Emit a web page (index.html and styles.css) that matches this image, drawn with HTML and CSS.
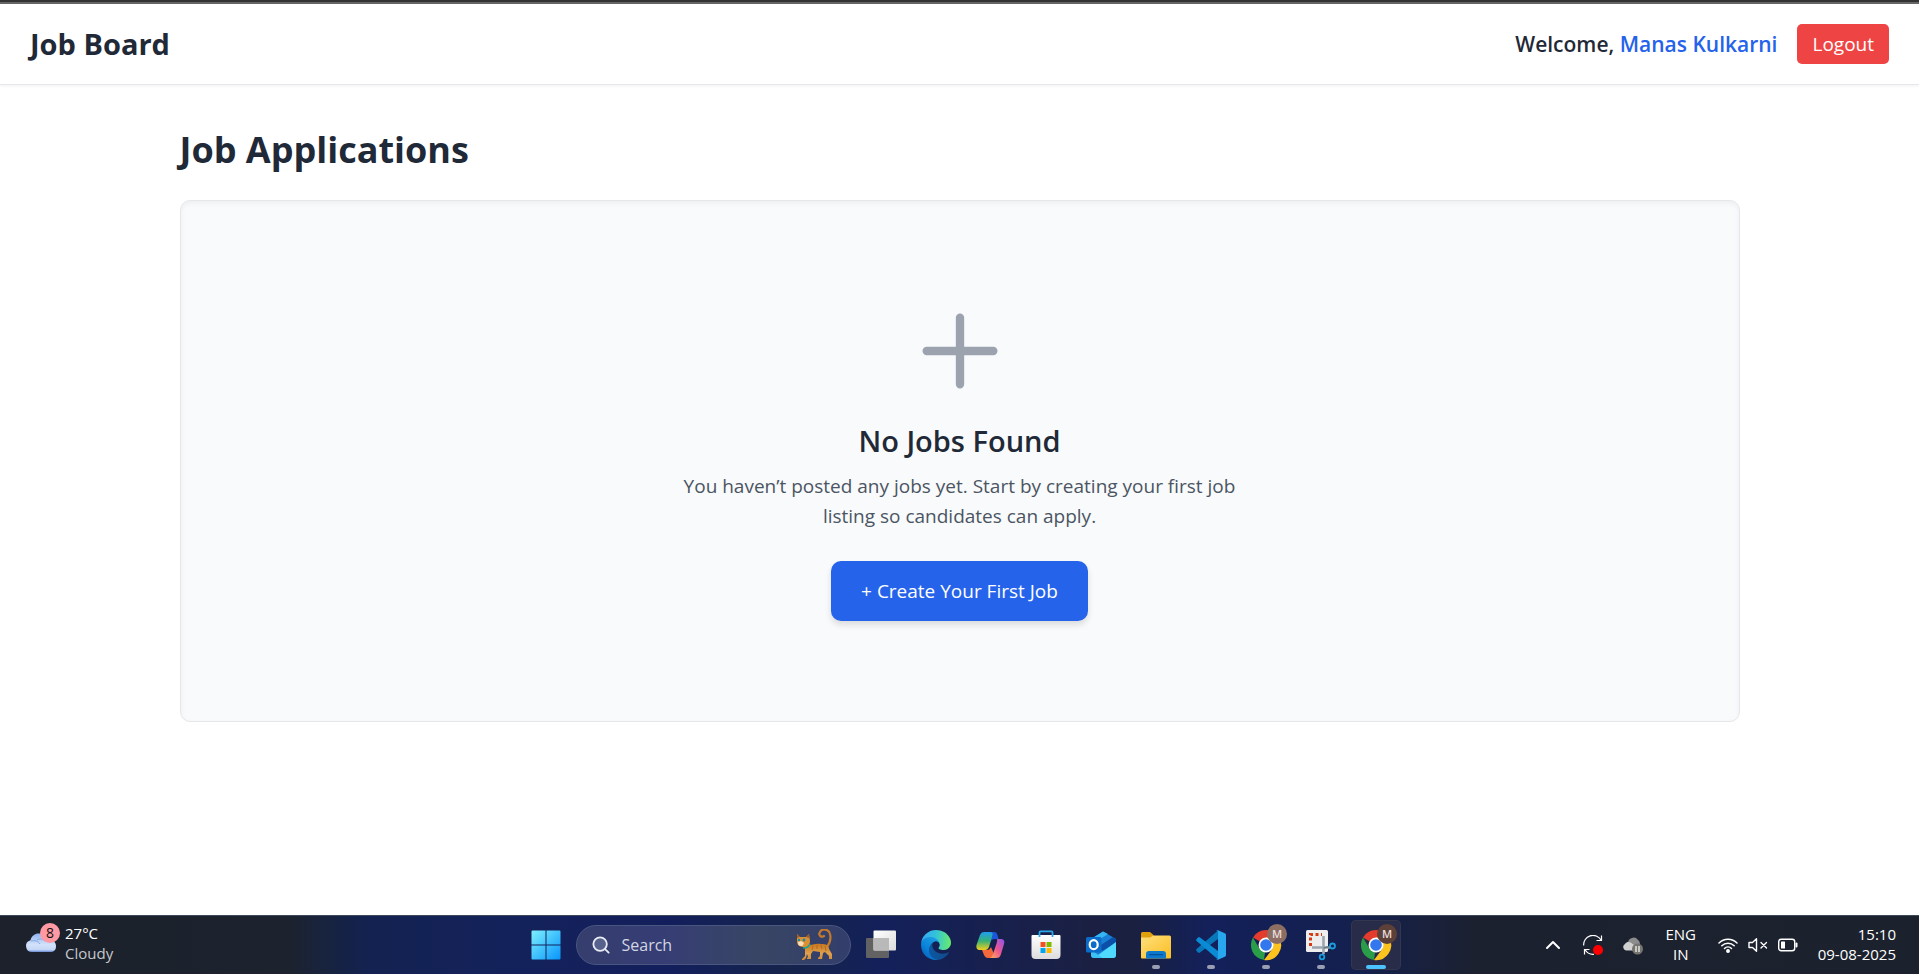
FILE: index.html
```html
<!DOCTYPE html>
<html lang="en">
<head>
<meta charset="utf-8">
<meta name="viewport" content="width=device-width, initial-scale=1">
<title>Job Board</title>
<link rel="stylesheet" href="styles.css">
</head>
<body>
<header class="site-header">
  <div class="brand">Job Board</div>
  <div class="account">
    <p class="welcome">Welcome, <span class="user-name">Manas Kulkarni</span></p>
    <button class="logout" type="button">Logout</button>
  </div>
</header>

<main class="page">
  <h1 class="page-title">Job Applications</h1>
  <section class="empty">
    <svg class="empty-icon" viewBox="0 0 24 24" fill="none" stroke="currentColor" stroke-width="2" stroke-linecap="round" aria-hidden="true"><path d="M12 4v16M4 12h16"/></svg>
    <h2 class="empty-title">No Jobs Found</h2>
    <p class="empty-text">You haven’t posted any jobs yet. Start by creating your first job listing so candidates can apply.</p>
    <button class="create" type="button">+ Create Your First Job</button>
  </section>
</main>

<footer class="taskbar">
  <button class="weather" type="button">
    <svg class="weather-icon" viewBox="0 0 36 32" aria-hidden="true">
      <defs><linearGradient id="cloud" x1="0" y1="0" x2="0" y2="1"><stop offset="0" stop-color="#8fb3ee"/><stop offset=".6" stop-color="#d3e2fa"/><stop offset=".88" stop-color="#c4d6f7"/><stop offset="1" stop-color="#6488d3"/></linearGradient></defs>
      <path fill="url(#cloud)" d="M7 29a6 6 0 0 1-1.500-11.800C7 11.500 12 9.500 16 11c4 1 6 3 7 6 4-1 8 2 8 6 0 4-2 6-6 6z"/>
      <path fill="none" stroke="#84a6e3" stroke-width="1" d="M6 18c4-1 7 0 9 3M12 17c3-2 6-1 8 1"/>
      <circle cx="25" cy="10" r="10" fill="#ff99a4"/>
      <text class="badge-count" x="25" y="15" text-anchor="middle">8</text>
    </svg>
    <span class="weather-text"><span>27°C</span><span class="weather-state">Cloudy</span></span>
  </button>

  <nav class="apps" aria-label="Apps">
    <button class="app" type="button" aria-label="Start">
      <svg class="app-icon" viewBox="0 0 30 30"><defs><linearGradient id="win" x1="0" y1="0" x2="1" y2="1"><stop offset="0" stop-color="#7df0fd"/><stop offset="1" stop-color="#0795fb"/></linearGradient></defs><path fill="url(#win)" d="M1.500.500H14.500V14.500H.500V1.500a1 1 0 0 1 1-1zM15.500.500H28.500a1 1 0 0 1 1 1V14.500h-14zM.500 15.500h14v14H1.500a1 1 0 0 1-1-1zM15.500 15.500h14v13a1 1 0 0 1-1 1h-13z"/></svg>
    </button>
    <label class="search">
      <svg class="search-icon" viewBox="0 0 20 20" fill="none" stroke="#e8ebf4" stroke-width="2" stroke-linecap="round" aria-hidden="true"><circle cx="9" cy="9" r="7.500" fill="#56628b"/><path d="m14.500 14.500 4 4"/></svg>
      <input class="search-input" type="search" placeholder="Search" aria-label="Search">
      <svg class="cat" viewBox="0 0 36 32" aria-hidden="true">
        <defs><linearGradient id="fur" x1="0" y1="0" x2="0" y2="1"><stop offset="0" stop-color="#c9771f"/><stop offset=".6" stop-color="#e0a04c"/><stop offset="1" stop-color="#d08a38"/></linearGradient></defs>
        <path fill="none" stroke="#c47a2c" stroke-width="2.200" stroke-linecap="round" d="M31 18c3-4 4-9 3-13-1-5-8-6-10-2-2 3 1 6 4 4"/>
        <path fill="url(#fur)" d="M9 17c6 0 10-3 16-2 5 0 8 1 8 5l3 5v5h-3v-3l-4-4-2 1-1 6h-4v-1l2-2v-4l-7-1-2 3v5h-4v-1l1-1-1-3-1 4-2 2H6v-1l3-3z"/>
        <path fill="none" stroke="#b5691f" stroke-width="1" d="M17 17l-1 4M21 16v4M25 16l1 4M29 17l1 5"/>
        <path fill="#db9036" d="M1 5l3 3h6l3-3 1 7c0 4-3 6-6 6-4 0-7-2-7-5z"/>
        <path fill="#f6dfba" d="M2 13c2-1 4-1 6 1-1 3-2 3-3 3-2 0-3-1-3-4z"/>
        <path fill="#a65a1c" d="m1 5 3 3-3 1zm12 0v4l-3-1z"/>
        <circle cx="3" cy="11" r="1.200" fill="#168ca0"/><circle cx="8" cy="11" r="1.400" fill="#168ca0"/>
        <path fill="none" stroke="#1fa78b" stroke-width="1.500" d="M7 19c3 0 6-1 7-4"/>
      </svg>
    </label>
    <button class="app" type="button" aria-label="Task view">
      <svg class="app-icon" viewBox="0 0 30 30"><defs><linearGradient id="tv" x1="0" y1="0" x2="1" y2="1"><stop offset="0" stop-color="#fff"/><stop offset="1" stop-color="#dcdcdc"/></linearGradient></defs><rect y="8" width="23" height="20" rx="1" fill="#626262"/><rect x="7.500" y=".500" width="22.500" height="20" rx="1" fill="url(#tv)"/><path fill="#b9b9b9" d="M7.500 8H23v12.500H8.500a1 1 0 0 1-1-1z"/></svg>
    </button>
    <button class="app" type="button" aria-label="Edge">
      <svg class="app-icon" viewBox="0 0 256 256">
        <defs>
          <linearGradient id="e1" x1="60" y1="180" x2="240" y2="180" gradientUnits="userSpaceOnUse"><stop offset="0" stop-color="#0c59a4"/><stop offset="1" stop-color="#114a8b"/></linearGradient>
          <linearGradient id="e2" x1="150" y1="100" x2="45" y2="220" gradientUnits="userSpaceOnUse"><stop offset="0" stop-color="#1b9de2"/><stop offset=".67" stop-color="#0883d9"/><stop offset="1" stop-color="#0a6cc5"/></linearGradient>
          <linearGradient id="e3" x1="10" y1="90" x2="250" y2="110" gradientUnits="userSpaceOnUse"><stop offset="0" stop-color="#35aaf0"/><stop offset=".45" stop-color="#32c2dc"/><stop offset="1" stop-color="#66eb6e"/></linearGradient>
        </defs>
        <path fill="url(#e1)" d="M231 190.500c-3.400 1.800-6.900 3.300-10.500 4.700a101.900 101.900 0 0 1-35.900 6.500c-47.300 0-88.500-32.500-88.500-74.300.1-11.400 6.400-21.800 16.400-27.200-42.800 1.800-53.800 46.400-53.800 72.500 0 73.900 68.100 81.400 82.800 81.400 7.900 0 19.800-2.300 27-4.600l1.300-.4a128.300 128.300 0 0 0 66.600-52.800 4 4 0 0 0-5.400-5.800z"/>
        <path fill="url(#e2)" d="M105.700 241.400a79.200 79.200 0 0 1-22.700-21.300 80.700 80.700 0 0 1 29.500-119.900c3.100-1.500 8.500-4.100 15.600-4a32.400 32.400 0 0 1 25.700 13 31.900 31.900 0 0 1 6.300 18.700c0-.2 24.500-79.600-80-79.600-43.900 0-80 41.700-80 78.200a130.200 130.200 0 0 0 12.100 56 128 128 0 0 0 156.400 67.100 75.500 75.500 0 0 1-62.800-8z"/>
        <path fill="url(#e3)" d="M152.300 148.900c-.9 1-3.400 2.500-3.400 5.600 0 2.600 1.700 5.200 4.800 7.300 14.300 10 41.400 8.600 41.500 8.600a59.600 59.600 0 0 0 30.300-8.300 61.400 61.400 0 0 0 30.400-52.900c.3-22.400-8-37.300-11.300-43.900C223.500 23.900 177.700 0 128 0A128 128 0 0 0 0 126.200c.5-36.500 36.800-66 80-66 3.500 0 23.500.3 42 10.100 16.300 8.500 24.900 18.800 30.800 29.200 6.200 10.700 7.300 24.100 7.300 29.500s-2.700 13.300-7.800 19.900z"/>
      </svg>
    </button>
    <button class="app" type="button" aria-label="Copilot">
      <svg class="app-icon" viewBox="0 0 30 30">
        <defs>
          <linearGradient id="c1" x1="0" y1="0" x2="0" y2="1"><stop offset="0" stop-color="#1e9df0"/><stop offset=".5" stop-color="#38b275"/><stop offset="1" stop-color="#f4cf1b"/></linearGradient>
          <linearGradient id="c2" x1="1" y1="0" x2="0" y2="1"><stop offset="0" stop-color="#8a55f0"/><stop offset=".5" stop-color="#ec558f"/><stop offset="1" stop-color="#ffb657"/></linearGradient>
        </defs>
        <path fill="#1a57d8" d="M9 2h9c2 0 3 1 3.500 3l1 4H19c-3 0-4 1-5 4z"/>
        <path fill="#f4683c" d="M6 20h5c2 0 3-1 4-3l3 7-2 4h-4c-2 0-3-1-4-3z"/>
        <path fill="url(#c1)" d="M8 2h6c2 0 3 1 2.500 3L13 17c-1 2-2 3-4 3H4c-3 0-4-2-3.500-5L4 5c1-2 2-3 4-3z"/>
        <path fill="url(#c2)" d="M20 9h4c4 0 5 2 4 5l-3 10c-1 3-2 4-5 4h-7c3 0 3-2 4-4l4-12c0-2 1-3-1-3z"/>
      </svg>
    </button>
    <button class="app" type="button" aria-label="Microsoft Store">
      <svg class="app-icon" viewBox="0 0 30 30"><defs><linearGradient id="st" x1="0" y1="0" x2="0" y2="1"><stop offset="0" stop-color="#fff"/><stop offset="1" stop-color="#dcdcdc"/></linearGradient></defs><path fill="url(#st)" d="M1.500 5h27a1 1 0 0 1 1 1v19a4 4 0 0 1-4 4H4.500a4 4 0 0 1-4-4V6a1 1 0 0 1 1-1z"/><path fill="none" stroke="#29a9ea" stroke-width="1.800" d="M8.500 7V2.400a1 1 0 0 1 1-1h11a1 1 0 0 1 1 1V7"/><path fill="#f25022" d="M9.500 12h5v5h-5z"/><path fill="#7fba00" d="M15.500 12h5v5h-5z"/><path fill="#00a4ef" d="M9.500 18h5v5h-5z"/><path fill="#ffb900" d="M15.500 18h5v5h-5z"/></svg>
    </button>
    <button class="app" type="button" aria-label="Outlook">
      <svg class="app-icon" viewBox="0 0 30 30"><path fill="#1a80d6" d="M5 9 17 1.500 30 9v16a3 3 0 0 1-3 3H8a3 3 0 0 1-3-3z"/><path fill="#35b5f2" d="M5 9 17 1.500 22 4 8 13z"/><path fill="#0b4fa8" d="m27 7 3 2v4L16 21l-4-4z"/><path fill="#50d9ff" d="M30 12v13a3 3 0 0 1-3 3H8z"/><path fill="#3cc3f6" d="M5 20l12 8H8a3 3 0 0 1-3-3z"/><rect y="7" width="15.500" height="15.500" rx="1.500" fill="#0c6cca"/><ellipse cx="7.700" cy="14.700" rx="4" ry="4.500" fill="none" stroke="#fff" stroke-width="2.200"/></svg>
    </button>
    <button class="app running" type="button" aria-label="File Explorer">
      <svg class="app-icon" viewBox="0 0 30 30"><defs><linearGradient id="fo" x1="0" y1="0" x2="1" y2="1"><stop offset="0" stop-color="#ffe07c"/><stop offset="1" stop-color="#fbbd23"/></linearGradient></defs><path fill="#e2a10c" d="M0 3.500a1.500 1.500 0 0 1 1.500-1.500H9l4 3.500-3 3H0z"/><path fill="url(#fo)" d="M0 7.500h9l3.500-2H28.500A1.500 1.500 0 0 1 30 7v20.500a1 1 0 0 1-1 1H1a1 1 0 0 1-1-1z"/><path fill="#0d79cd" d="M5 28.500V24a3 3 0 0 1 3-3h14a3 3 0 0 1 3 3v4.500z"/><path stroke="#07509d" stroke-width="1.200" stroke-linecap="round" d="M8.500 24.700h13"/></svg>
    </button>
    <button class="app running" type="button" aria-label="Visual Studio Code">
      <svg class="app-icon" viewBox="0 0 30 30"><path fill="#0877b9" d="M22 .500v8.500L4 22.500a1.500 1.500 0 0 1-2 0L.600 21a1.300 1.300 0 0 1 0-2z"/><path fill="#0b8bd3" d="M22 29.500V21L4 7.500a1.500 1.500 0 0 0-2 0L.600 9a1.300 1.300 0 0 0 0 2z"/><path fill="#29a7ee" d="M22 .200 28.800 3.300c.7.300 1.200 1 1.200 1.800v19.800c0 .8-.5 1.500-1.200 1.800L22 29.800c-.8.300-1.500.1-2-.5.900.7 2 .1 2-1V1.700c0-1.100-1.100-1.700-2-1 .5-.6 1.200-.8 2-.5z"/></svg>
    </button>
    <button class="app running" type="button" aria-label="Chrome">
      <svg class="app-icon wide" viewBox="0 0 36 36">
        <path fill="#e33b2e" d="M15 21 2 13.500A15 15 0 0 1 28 13.500z"/><path fill="#2a9d48" d="M15 21l-2 15A15 15 0 0 1 2 13.500L8.500 24.800z"/><path fill="#fcc31e" d="M15 21V13.500h13A15 15 0 0 1 13 36l8.500-11.200z"/><circle cx="15" cy="21" r="7.500" fill="#fff"/><circle cx="15" cy="21" r="5.800" fill="#3277ed"/>
        <circle cx="26" cy="10" r="10" fill="#8d6e63"/><text class="profile" x="26" y="14" text-anchor="middle">M</text>
      </svg>
    </button>
    <button class="app running" type="button" aria-label="Snipping Tool">
      <svg class="app-icon" viewBox="0 0 30 30"><rect width="22" height="22" rx="1.500" fill="#eee"/><path fill="none" stroke="#d83b12" stroke-width="3" stroke-dasharray="3 2.500" d="M4.500 16V4.500H16"/><path stroke="#9ba6b0" stroke-width="2.600" d="M17.500 6v18M6 17.500h18"/><path stroke="#6b7883" stroke-width="1.500" d="m17.500 18 6-1.500"/><g fill="none" stroke="#1b9ddc" stroke-width="1.800"><circle cx="16" cy="27" r="2.300"/><circle cx="26.500" cy="16" r="2.500"/></g></svg>
    </button>
    <button class="app running active" type="button" aria-label="Chrome, current window">
      <svg class="app-icon wide" viewBox="0 0 36 36">
        <path fill="#e33b2e" d="M15 21 2 13.500A15 15 0 0 1 28 13.500z"/><path fill="#2a9d48" d="M15 21l-2 15A15 15 0 0 1 2 13.500L8.500 24.800z"/><path fill="#fcc31e" d="M15 21V13.500h13A15 15 0 0 1 13 36l8.500-11.200z"/><circle cx="15" cy="21" r="7.500" fill="#fff"/><circle cx="15" cy="21" r="5.800" fill="#3277ed"/>
        <circle cx="26" cy="10" r="10" fill="#5d4037"/><text class="profile" x="26" y="14" text-anchor="middle">M</text>
      </svg>
    </button>
  </nav>

  <div class="tray">
    <button class="tray-button" type="button" aria-label="Show hidden icons"><svg class="tray-icon" viewBox="0 0 20 20" fill="none" stroke="#fff" stroke-width="2" stroke-linecap="round" stroke-linejoin="round"><path d="m4 13 6-6 6 6"/></svg></button>
    <button class="tray-button" type="button" aria-label="Updates"><svg class="tray-icon" viewBox="0 0 20 20" fill="none" stroke="#fff" stroke-width="1.200"><path d="M.700 10.500A9.300 9.300 0 0 1 18 5M18.500.500V5.500H13.500M11 19.300A9.300 9.300 0 0 1 2 14.500M1.500 19.500v-5h5"/><circle cx="15" cy="15" r="5" fill="red" stroke="none"/></svg></button>
    <button class="tray-button" type="button" aria-label="OneDrive"><svg class="tray-icon" viewBox="0 0 20 20"><path fill="#8c8c8c" d="M5 8a5.500 5.500 0 0 1 10-3c2 1 2 4 2 6l-7 1z"/><path fill="#d0d0d0" d="M3 15.500A3.500 3.500 0 0 1 2 9c2-3 6-2 7.500 0l4 2-3 4.500z"/><circle cx="14.500" cy="14" r="5.500" fill="#77756f"/><path stroke="#fff" stroke-width="1.200" d="M13 11v6M16 11v6"/></svg></button>
    <button class="language" type="button"><span>ENG</span><span>IN</span></button>
    <button class="status" type="button" aria-label="Network, volume and battery">
      <svg class="tray-icon" viewBox="0 0 20 20" fill="none" stroke="#fff" stroke-width="1.500" stroke-linecap="round"><path d="M1 8a12.500 12.500 0 0 1 18 0M3.800 10.800a8.700 8.700 0 0 1 12.400 0M6.500 13.500a5 5 0 0 1 7 0"/><circle cx="10" cy="16" r="1.200" fill="#fff"/></svg>
      <svg class="tray-icon" viewBox="0 0 20 20" fill="none" stroke="#fff" stroke-width="1.400" stroke-linejoin="round" stroke-linecap="round"><path d="M1 7.500h3.500l4-3.800v12.600l-4-3.800H1zM13 7.500l5.500 5.500M18.500 7.500 13 13"/></svg>
      <svg class="tray-icon" viewBox="0 0 20 20" fill="none" stroke="#fff" stroke-width="1.400"><rect x=".700" y="4.200" width="16" height="11.600" rx="2.500"/><rect x="3" y="6.500" width="4" height="7" rx=".5" fill="#fff" stroke="none"/><path stroke-width="2" stroke-linecap="round" d="M18.500 8.500v3"/></svg>
    </button>
    <button class="clock" type="button"><time>15:10</time><time datetime="2025-08-09">09-08-2025</time></button>
  </div>
</footer>
</body>
</html>
```
FILE: styles.css
```css
* {
  box-sizing: border-box;
}

body {
  margin: 0;
  min-height: 100vh;
  display: flex;
  flex-direction: column;
  background: #fff;
  color: #1f2937;
  font-family: "Segoe UI", "Open Sans", "Noto Sans", sans-serif;
  font-size: 19px;
}

h1, h2, p {
  margin: 0;
}

button {
  border: 0;
  padding: 0;
  background: none;
  color: inherit;
  font: inherit;
  cursor: pointer;
}

.site-header {
  display: flex;
  align-items: center;
  justify-content: space-between;
  padding: 22px 30px 20px;
  border-top: 2px solid #333;
  border-bottom: 1px solid #e5e7eb;
  box-shadow: inset 0 2px #666, 0 1px 3px rgba(0, 0, 0, 0.06);
}

.brand {
  font-size: 29px;
  font-weight: 700;
  line-height: 40px;
}

.account {
  display: flex;
  align-items: center;
  gap: 20px;
}

.welcome {
  font-size: 21px;
  font-weight: 600;
  line-height: 40px;
}

.user-name {
  color: #2563eb;
}

.logout {
  padding: 5px 15px;
  border-radius: 5px;
  background: #ef4444;
  color: #fff;
  line-height: 30px;
}

.page {
  flex: 1;
  width: 100%;
  max-width: 1640px;
  margin: 0 auto;
  padding: 40px;
}

.page-title {
  margin-bottom: 25px;
  font-size: 36px;
  line-height: 50px;
}

.empty {
  display: flex;
  flex-direction: column;
  align-items: center;
  padding: 100px 20px;
  border: 1px solid #e5e7eb;
  border-radius: 10px;
  background: #f9fafb;
  box-shadow: inset 0 2px 5px rgba(0, 0, 0, 0.05);
  text-align: center;
}

.empty-icon {
  width: 100px;
  height: 100px;
  margin-bottom: 20px;
  color: #9ca3af;
}

.empty-title {
  margin-bottom: 10px;
  font-size: 29px;
  font-weight: 600;
  line-height: 40px;
}

.empty-text {
  max-width: 560px;
  margin-bottom: 30px;
  color: #4b5563;
  line-height: 30px;
}

.create {
  padding: 15px 30px;
  border-radius: 10px;
  background: #2563eb;
  box-shadow: 0 4px 6px rgba(0, 0, 0, 0.12);
  color: #fff;
  font-weight: 500;
  line-height: 30px;
}

.taskbar {
  display: grid;
  grid-template-columns: 1fr auto 1fr;
  align-items: center;
  height: 59px;
  padding: 0 23px 0 25px;
  border-top: 1px solid #3d4a5a;
  background: linear-gradient(90deg, #1c212b 0%, #1c232e 15%, #13224f 19%, #14225a 25%, #131f5c 35%, #15244b 41%, #13205a 46%, #1b2042 57%, #1a2040 59%, #13205a 63%, #14204d 71%, #1c212f 77%, #1b222d 100%);
  color: #fff;
  font-size: 15px;
  line-height: 20px;
}

.weather {
  justify-self: start;
  display: flex;
  align-items: flex-start;
  gap: 4px;
  padding-bottom: 4px;
  text-align: left;
}

.weather-icon {
  width: 36px;
  height: 32px;
}

.badge-count {
  font-size: 14px;
  fill: #111;
}

.weather-text, .language, .clock {
  display: flex;
  flex-direction: column;
}

.language, .clock {
  padding-bottom: 2px;
}

.weather-state {
  color: #c6c8cc;
}

.apps {
  display: flex;
  align-items: center;
  gap: 5px;
}

.app {
  position: relative;
  display: grid;
  place-items: center;
  width: 50px;
  height: 50px;
  border-radius: 5px;
}

.app-icon {
  width: 30px;
  height: 30px;
  overflow: visible;
}

.app-icon.wide {
  width: 36px;
  height: 36px;
  margin: 0 0 6px 6px;
}

.profile {
  font-size: 11px;
  font-weight: 600;
  fill: #e8dedb;
}

.running::after {
  content: "";
  position: absolute;
  bottom: 1px;
  width: 8px;
  height: 4px;
  border-radius: 2px;
  background: #9a9eb2;
}

.active {
  background: #282c48;
  box-shadow: inset 0 0 0 1px #32364f;
}

.active::after {
  width: 20px;
  background: #4cc2ff;
}

.search {
  display: flex;
  align-items: center;
  gap: 12px;
  width: 275px;
  height: 40px;
  padding: 0 18px 0 15px;
  border: 1px solid #4b5680;
  border-radius: 20px;
  background: linear-gradient(90deg, #353e6d, #363d75 30%, #384664 68%, #333e6c);
}

.search-icon {
  flex: none;
  width: 18px;
  height: 18px;
}

.search-input {
  flex: 1;
  min-width: 0;
  padding: 0;
  border: 0;
  outline: 0;
  background: none;
  color: #fff;
  font: inherit;
  font-size: 16px;
}

.search-input::placeholder {
  color: #d2d5e2;
}

.cat {
  flex: none;
  width: 36px;
  height: 32px;
}

.tray {
  justify-self: end;
  display: flex;
  align-items: center;
}

.tray-button {
  display: grid;
  place-items: center;
  width: 40px;
  height: 40px;
}

.tray-icon {
  width: 20px;
  height: 20px;
}

.language {
  align-items: center;
  width: 56px;
}

.status {
  display: flex;
  gap: 10px;
  margin: 0 10px 0 9px;
}

.clock {
  align-items: flex-end;
  margin-left: 10px;
}
```
